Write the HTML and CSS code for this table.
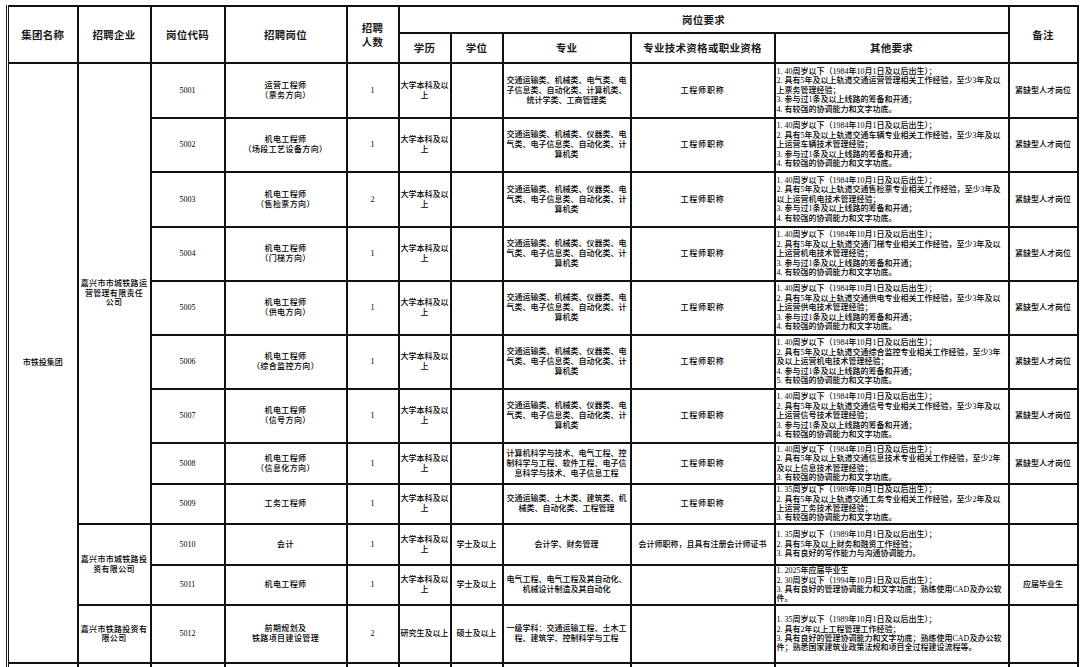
FILE: index.html
```html
<!DOCTYPE html>
<html lang="zh-CN">
<head>
<meta charset="utf-8">
<title>招聘岗位表</title>
<link rel="stylesheet" href="styles.css">
</head>
<body>
<div class="sheet">
<table class="recruit">
  <colgroup>
    <col class="c-group"><col class="c-company"><col class="c-code"><col class="c-post"><col class="c-num"><col class="c-edu"><col class="c-deg"><col class="c-major"><col class="c-qual"><col class="c-other"><col class="c-note">
  </colgroup>
  <thead>
    <tr class="h-top">
      <th rowspan="2" class="edge">集团名称</th>
      <th rowspan="2">招聘企业</th>
      <th rowspan="2">岗位代码</th>
      <th rowspan="2">招聘岗位</th>
      <th rowspan="2">招聘<br>人数</th>
      <th colspan="5">岗位要求</th>
      <th rowspan="2">备注</th>
    </tr>
    <tr class="h-sub">
      <th>学历</th>
      <th>学位</th>
      <th>专业</th>
      <th>专业技术资格或职业资格</th>
      <th>其他要求</th>
    </tr>
  </thead>
  <tbody>
    <tr class="r55">
      <td rowspan="12" class="edge">市铁投集团</td>
      <td rowspan="9" class="company"><span class="ln">嘉兴市市城铁路运</span><span class="ln">营管理有限责任</span><span class="ln">公司</span></td>
      <td>5001</td>
      <td class="post"><span class="ln">运营工程师</span><span class="ln">（票务方向）</span></td>
      <td>1</td>
      <td><span class="ln">大学本科及以</span><span class="ln">上</span></td>
      <td></td>
      <td><span class="ln">交通运输类、机械类、电气类、电</span><span class="ln">子信息类、自动化类、计算机类、</span><span class="ln">统计学类、工商管理类</span></td>
      <td class="qual">工程师职称</td>
      <td class="other"><span class="ln">1. 40周岁以下（1984年10月1日及以后出生）；</span><span class="ln">2. 具有5年及以上轨道交通运营管理相关工作经验，至少3年及以</span><span class="ln">上票务管理经验；</span><span class="ln">3. 参与过1条及以上线路的筹备和开通；</span><span class="ln">4. 有较强的协调能力和文字功底。</span></td>
      <td>紧缺型人才岗位</td>
    </tr>
    <tr class="r54">
      <td>5002</td>
      <td class="post"><span class="ln">机电工程师</span><span class="ln">（场段工艺设备方向）</span></td>
      <td>1</td>
      <td><span class="ln">大学本科及以</span><span class="ln">上</span></td>
      <td></td>
      <td><span class="ln">交通运输类、机械类、仪器类、电</span><span class="ln">气类、电子信息类、自动化类、计</span><span class="ln">算机类</span></td>
      <td class="qual">工程师职称</td>
      <td class="other"><span class="ln">1. 40周岁以下（1984年10月1日及以后出生）；</span><span class="ln">2. 具有5年及以上轨道交通车辆专业相关工作经验，至少3年及以</span><span class="ln">上运营车辆技术管理经验；</span><span class="ln">3. 参与过1条及以上线路的筹备和开通；</span><span class="ln">4. 有较强的协调能力和文字功底。</span></td>
      <td>紧缺型人才岗位</td>
    </tr>
    <tr class="r55">
      <td>5003</td>
      <td class="post"><span class="ln">机电工程师</span><span class="ln">（售检票方向）</span></td>
      <td>2</td>
      <td><span class="ln">大学本科及以</span><span class="ln">上</span></td>
      <td></td>
      <td><span class="ln">交通运输类、机械类、仪器类、电</span><span class="ln">气类、电子信息类、自动化类、计</span><span class="ln">算机类</span></td>
      <td class="qual">工程师职称</td>
      <td class="other"><span class="ln">1. 40周岁以下（1984年10月1日及以后出生）；</span><span class="ln">2. 具有5年及以上轨道交通售检票专业相关工作经验，至少3年及</span><span class="ln">以上运营机电技术管理经验；</span><span class="ln">3. 参与过1条及以上线路的筹备和开通；</span><span class="ln">4. 有较强的协调能力和文字功底。</span></td>
      <td>紧缺型人才岗位</td>
    </tr>
    <tr class="r54">
      <td>5004</td>
      <td class="post"><span class="ln">机电工程师</span><span class="ln">（门梯方向）</span></td>
      <td>1</td>
      <td><span class="ln">大学本科及以</span><span class="ln">上</span></td>
      <td></td>
      <td><span class="ln">交通运输类、机械类、仪器类、电</span><span class="ln">气类、电子信息类、自动化类、计</span><span class="ln">算机类</span></td>
      <td class="qual">工程师职称</td>
      <td class="other"><span class="ln">1. 40周岁以下（1984年10月1日及以后出生）；</span><span class="ln">2. 具有5年及以上轨道交通门梯专业相关工作经验，至少3年及以</span><span class="ln">上运营机电技术管理经验；</span><span class="ln">3. 参与过1条及以上线路的筹备和开通；</span><span class="ln">4. 有较强的协调能力和文字功底。</span></td>
      <td>紧缺型人才岗位</td>
    </tr>
    <tr class="r54">
      <td>5005</td>
      <td class="post"><span class="ln">机电工程师</span><span class="ln">（供电方向）</span></td>
      <td>1</td>
      <td><span class="ln">大学本科及以</span><span class="ln">上</span></td>
      <td></td>
      <td><span class="ln">交通运输类、机械类、仪器类、电</span><span class="ln">气类、电子信息类、自动化类、计</span><span class="ln">算机类</span></td>
      <td class="qual">工程师职称</td>
      <td class="other"><span class="ln">1. 40周岁以下（1984年10月1日及以后出生）；</span><span class="ln">2. 具有5年及以上轨道交通供电专业相关工作经验，至少3年及以</span><span class="ln">上运营供电技术管理经验；</span><span class="ln">3. 参与过1条及以上线路的筹备和开通；</span><span class="ln">4. 有较强的协调能力和文字功底。</span></td>
      <td>紧缺型人才岗位</td>
    </tr>
    <tr class="r54">
      <td>5006</td>
      <td class="post"><span class="ln">机电工程师</span><span class="ln">（综合监控方向）</span></td>
      <td>1</td>
      <td><span class="ln">大学本科及以</span><span class="ln">上</span></td>
      <td></td>
      <td><span class="ln">交通运输类、机械类、仪器类、电</span><span class="ln">气类、电子信息类、自动化类、计</span><span class="ln">算机类</span></td>
      <td class="qual">工程师职称</td>
      <td class="other"><span class="ln">1. 40周岁以下（1984年10月1日及以后出生）；</span><span class="ln">2. 具有5年及以上轨道交通综合监控专业相关工作经验，至少3年</span><span class="ln">及以上运营机电技术管理经验；</span><span class="ln">4. 参与过1条及以上线路的筹备和开通；</span><span class="ln">5. 有较强的协调能力和文字功底。</span></td>
      <td>紧缺型人才岗位</td>
    </tr>
    <tr class="r54">
      <td>5007</td>
      <td class="post"><span class="ln">机电工程师</span><span class="ln">（信号方向）</span></td>
      <td>1</td>
      <td><span class="ln">大学本科及以</span><span class="ln">上</span></td>
      <td></td>
      <td><span class="ln">交通运输类、机械类、仪器类、电</span><span class="ln">气类、电子信息类、自动化类、计</span><span class="ln">算机类</span></td>
      <td class="qual">工程师职称</td>
      <td class="other"><span class="ln">1. 40周岁以下（1984年10月1日及以后出生）；</span><span class="ln">2. 具有5年及以上轨道交通信号专业相关工作经验，至少3年及以</span><span class="ln">上运营信号技术管理经验；</span><span class="ln">3. 参与过1条及以上线路的筹备和开通；</span><span class="ln">4. 有较强的协调能力和文字功底。</span></td>
      <td>紧缺型人才岗位</td>
    </tr>
    <tr class="r41">
      <td>5008</td>
      <td class="post"><span class="ln">机电工程师</span><span class="ln">（信息化方向）</span></td>
      <td>1</td>
      <td><span class="ln">大学本科及以</span><span class="ln">上</span></td>
      <td></td>
      <td><span class="ln">计算机科学与技术、电气工程、控</span><span class="ln">制科学与工程、软件工程、电子信</span><span class="ln">息科学与技术、电子信息工程</span></td>
      <td class="qual">工程师职称</td>
      <td class="other"><span class="ln">1. 40周岁以下（1984年10月1日及以后出生）；</span><span class="ln">2. 具有5年及以上轨道交通信息技术专业相关工作经验，至少2年</span><span class="ln">及以上信息技术管理经验；</span><span class="ln">3. 有较强的协调能力和文字功底。</span></td>
      <td>紧缺型人才岗位</td>
    </tr>
    <tr class="r40">
      <td>5009</td>
      <td class="post">工务工程师</td>
      <td>1</td>
      <td><span class="ln">大学本科及以</span><span class="ln">上</span></td>
      <td></td>
      <td><span class="ln">交通运输类、土木类、建筑类、机</span><span class="ln">械类、自动化类、工程管理</span></td>
      <td class="qual">工程师职称</td>
      <td class="other"><span class="ln">1. 35周岁以下（1989年10月1日及以后出生）；</span><span class="ln">2. 具有5年及以上轨道交通工务专业相关工作经验，至少2年及以</span><span class="ln">上运营工务技术管理经验；</span><span class="ln">3. 有较强的协调能力和文字功底。</span></td>
      <td></td>
    </tr>
    <tr class="r41">
      <td rowspan="2" class="company"><span class="ln">嘉兴市市城铁路投</span><span class="ln">资有限公司</span></td>
      <td>5010</td>
      <td class="post">会计</td>
      <td>1</td>
      <td><span class="ln">大学本科及以</span><span class="ln">上</span></td>
      <td>学士及以上</td>
      <td>会计学、财务管理</td>
      <td class="qual-long">会计师职称，且具有注册会计师证书</td>
      <td class="other"><span class="ln">1. 35周岁以下（1989年10月1日及以后出生）；</span><span class="ln">2. 具有5年及以上财务和融资工作经验；</span><span class="ln">3. 具有良好的写作能力与沟通协调能力。</span></td>
      <td></td>
    </tr>
    <tr class="r40">
      <td>5011</td>
      <td class="post">机电工程师</td>
      <td>1</td>
      <td><span class="ln">大学本科及以</span><span class="ln">上</span></td>
      <td>学士及以上</td>
      <td><span class="ln">电气工程、电气工程及其自动化、</span><span class="ln">机械设计制造及其自动化</span></td>
      <td></td>
      <td class="other"><span class="ln">1. 2025年应届毕业生</span><span class="ln">2. 30周岁以下（1994年10月1日及以后出生）；</span><span class="ln">3. 具有良好的管理协调能力和文字功底；熟练使用CAD及办公软</span><span class="ln">件。</span></td>
      <td>应届毕业生</td>
    </tr>
    <tr class="r58">
      <td class="company"><span class="ln">嘉兴市铁路投资有</span><span class="ln">限公司</span></td>
      <td>5012</td>
      <td class="post"><span class="ln">前期规划及</span><span class="ln">铁路项目建设管理</span></td>
      <td>2</td>
      <td>研究生及以上</td>
      <td>硕士及以上</td>
      <td><span class="ln">一级学科：交通运输工程、土木工</span><span class="ln">程、建筑学、控制科学与工程</span></td>
      <td></td>
      <td class="other"><span class="ln">1. 35周岁以下（1989年10月1日及以后出生）；</span><span class="ln">2. 具有2年以上工程管理工作经验；</span><span class="ln">3. 具有良好的管理协调能力和文字功底；熟练使用CAD及办公软</span><span class="ln">件；熟悉国家建筑业政策法规和项目全过程建设流程等。</span></td>
      <td></td>
    </tr>
    <tr class="r40">
      <td class="edge"></td><td></td><td></td><td></td><td></td><td></td><td></td><td></td><td></td><td></td><td></td>
    </tr>
  </tbody>
</table>
</div>
</body>
</html>
```

FILE: styles.css
```css
html, body {
  margin: 0;
  padding: 0;
  background: #ffffff;
}

.sheet {
  padding: 5px 0 0 6px;
}

.recruit {
  border-collapse: collapse;
  table-layout: fixed;
  width: 1070px;
  font-family: "Liberation Serif", "Noto Sans CJK SC", serif;
  font-size: 8px;
  line-height: 10px;
  font-weight: 500;
  color: #000;
}

.c-group { width: 70px; }
.c-company { width: 73px; }
.c-code { width: 74px; }
.c-post { width: 122px; }
.c-num { width: 52px; }
.c-edu { width: 52px; }
.c-deg { width: 52px; }
.c-major { width: 128px; }
.c-qual { width: 144px; }
.c-other { width: 234px; }
.c-note { width: 69px; }

.recruit th,
.recruit td {
  border: 2px solid #111;
  padding: 0;
  text-align: center;
  vertical-align: middle;
  overflow: visible;
  white-space: nowrap;
}

.recruit th {
  font-family: "Noto Sans CJK SC", sans-serif;
  font-weight: 700;
  font-size: 10.5px;
  line-height: 14px;
  letter-spacing: 0.3px;
  color: #1a1a1a;
}

.recruit .edge {
  border-left: 3px double #111;
}

.h-top { height: 27px; }
.h-sub { height: 30px; }
.r55 { height: 55px; }
.r54 { height: 54px; }
.r41 { height: 41px; }
.r40 { height: 40px; }
.r58 { height: 58px; }

.ln {
  display: block;
  white-space: nowrap;
}

.company {
  line-height: 9.5px;
  letter-spacing: 0.3px;
}

.post {
  letter-spacing: 0.4px;
}

.qual {
  letter-spacing: 0.8px;
}

.recruit td.other {
  text-align: left;
  padding-left: 1px;
  line-height: 9.4px;
}
```
